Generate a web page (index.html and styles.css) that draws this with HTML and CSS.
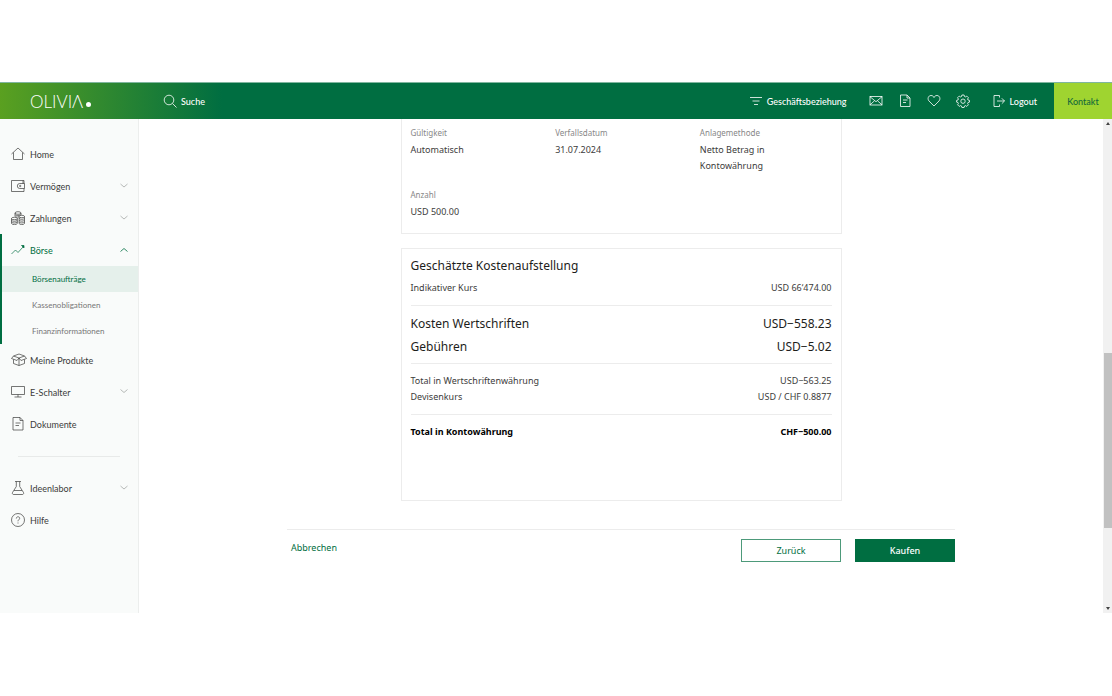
FILE: index.html
```html
<!DOCTYPE html>
<html lang="de">
<head>
<meta charset="utf-8">
<meta name="viewport" content="width=device-width, initial-scale=1">
<title>Olivia – Börsenaufträge</title>
<link rel="stylesheet" href="styles.css">
</head>
<body>
<div class="app">
  <header class="header">
    <a class="logo" href="#" aria-label="Olivia"><span>OLIVIɅ</span><span class="logo-dot"></span></a>
    <button class="head-item search" type="button">
      <svg class="icon" viewBox="0 0 14 14"><circle cx="6" cy="6" r="4.8"/><path d="M9.500 9.500l4 4"/></svg>Suche
    </button>
    <div class="head-actions">
      <button class="head-item relation" type="button">
        <svg class="icon" viewBox="0 0 14 14"><path d="M1 3.500h12M3.500 7h7M5 10.500h4"/></svg>Geschäftsbeziehung
      </button>
      <div class="tools">
        <a class="head-item" href="#" aria-label="Nachrichten"><svg class="icon" viewBox="0 0 14 14"><rect x="1" y="2.500" width="12" height="8.500"/><path d="M1 2.700l6 5 6-5M1 10.800l4.500-4M13 10.800l-4.500-4"/></svg></a>
        <a class="head-item" href="#" aria-label="Dokumente"><svg class="icon" viewBox="0 0 14 14"><path d="M2.500 1h6.500l3 3v8.500h-9.500zM9 1v3h3M5 6h4.500M5 8.500h3"/></svg></a>
        <a class="head-item" href="#" aria-label="Favoriten"><svg class="icon" viewBox="0 0 14 14"><path d="M7 12L2 7C.2 5 1.200 1.500 4 1.500c1.500 0 2.500.8 3 2 .5-1.200 1.500-2 3-2 2.800 0 3.800 3.500 2 5.500z"/></svg></a>
        <a class="head-item" href="#" aria-label="Einstellungen"><svg class="icon" viewBox="0 0 14 14"><path d="M5.900 1h2.200l.4 1.500 1 .4 1.300-.8 1.600 1.600-.8 1.300.4 1 1.500.400v1.700l-1.500.4-.4 1 .8 1.300-1.600 1.600-1.300-.8-1 .4-.4 1.500H5.900L5.500 12l-1-.4-1.300.8-1.600-1.600.8-1.300-.4-1L.6 8.100V6.400L2 6l.4-1-.8-1.300 1.600-1.600 1.300.8 1-.4z"/><circle cx="7" cy="7.200" r="2.200"/></svg></a>
      </div>
      <button class="head-item" type="button">
        <svg class="icon" viewBox="0 0 14 14"><path d="M7.500 3.500V1.500H2v11h5.500v-2M5 7h7.500M9.800 4.300l2.700 2.700-2.700 2.700"/></svg>Logout
      </button>
    </div>
    <a class="contact" href="#">Kontakt</a>
  </header>

  <div class="shell">
    <nav class="sidebar" aria-label="Hauptnavigation">
      <a class="nav-item" href="#"><svg class="icon" viewBox="0 0 14 14"><path d="M.5 7L7 1l6.500 6M2.500 5.500v7h9v-7"/></svg>Home</a>
      <a class="nav-item" href="#"><svg class="icon" viewBox="0 0 14 14"><path d="M13 4.500v-3H.5v11H13v-3M13.500 4.500H8.800a2.500 2.500 0 0 0 0 5h4.700zM12 1.500v3"/><circle cx="9.200" cy="7" r=".7"/></svg>Vermögen<svg class="chevron" viewBox="0 0 8 8"><path d="M.5 2L4 5l3.500-3"/></svg></a>
      <a class="nav-item" href="#"><svg class="icon" viewBox="0 0 14 14"><ellipse cx="7" cy="2" rx="3" ry="1.300"/><ellipse cx="3.400" cy="7.500" rx="2.900" ry="1.200"/><ellipse cx="10.800" cy="5.500" rx="2.700" ry="1.200"/><path d="M4 2v3.500M10 2v2M4.200 3.800c1 1 4 1 5.300 0M4.500 5.500c1 .7 2 .7 3.300.4M.5 7.500v5c.8 1.500 5 1.500 5.800 0v-5M.5 9.200c.8 1.500 5 1.500 5.800 0M.5 10.900c.8 1.500 5 1.500 5.800 0M8.100 5.500v7c.8 1.500 4.600 1.500 5.400 0v-7M8.100 7.300c.8 1.400 4.600 1.400 5.400 0M8.100 9.100c.8 1.400 4.600 1.400 5.400 0M8.100 10.900c.8 1.400 4.600 1.400 5.400 0"/></svg>Zahlungen<svg class="chevron" viewBox="0 0 8 8"><path d="M.5 2L4 5l3.500-3"/></svg></a>
      <div class="nav-group">
        <a class="nav-item active" href="#"><svg class="icon" viewBox="0 0 14 14"><path d="M.5 11L4.500 7l2.500 2.500L12 4"/><path class="solid" d="M10.500 2.500H13v2.500z"/></svg>Börse<svg class="chevron" viewBox="0 0 8 8"><path d="M.5 5.500L4 2.500l3.500 3"/></svg></a>
        <a class="sub-item current" href="#" aria-current="page">Börsenaufträge</a>
        <a class="sub-item" href="#">Kassenobligationen</a>
        <a class="sub-item" href="#">Finanzinformationen</a>
      </div>
      <a class="nav-item" href="#"><svg class="icon wide" viewBox="0 0 16 14"><path d="M2.500 3L8 5l5.500-2L8 1zM2.500 3L.5 5.500 6 7.500 8 5l2 2.500 5.500-2-2-2.500M2.500 6.500v4L8 12.500l5.500-2v-4M8 5v7.500"/></svg>Meine Produkte</a>
      <a class="nav-item" href="#"><svg class="icon" viewBox="0 0 14 14"><path d="M.5 1.500h13v8H.5zM7 9.500v2.500M3.500 12h7"/></svg>E-Schalter<svg class="chevron" viewBox="0 0 8 8"><path d="M.5 1.500L4 4.500l3.500-3"/></svg></a>
      <a class="nav-item" href="#"><svg class="icon" viewBox="0 0 14 14"><path d="M2 .5h7l3 3v9.500H2zM9 .5v3h3M4.500 6h5M4.500 8.500h3.500"/></svg>Dokumente</a>
      <hr class="nav-rule">
      <a class="nav-item" href="#"><svg class="icon" viewBox="0 0 14 14"><path d="M4 .5h6M5.300.5v5L1.500 11.500c-.5 1 .2 2 1 2h9c.8 0 1.500-1 1-2L8.700 5.500v-5M3 9.500h8"/></svg>Ideenlabor<svg class="chevron" viewBox="0 0 8 8"><path d="M.5 2L4 5l3.500-3"/></svg></a>
      <a class="nav-item" href="#"><svg class="icon" viewBox="0 0 14 14"><circle cx="7" cy="7" r="6.500"/><path d="M5.300 5.500c0-2.300 3.400-2.200 3.400-.2C8.700 6.700 7 6.600 7 8.300M7 9.500v1"/></svg>Hilfe</a>
    </nav>

    <main class="main">
      <section class="card details">
        <dl class="fields">
          <div><dt>Gültigkeit</dt><dd>Automatisch</dd></div>
          <div><dt>Verfallsdatum</dt><dd>31.07.2024</dd></div>
          <div><dt>Anlagemethode</dt><dd>Netto Betrag in<br>Kontowährung</dd></div>
          <div><dt>Anzahl</dt><dd>USD 500.00</dd></div>
        </dl>
      </section>

      <section class="card costs">
        <h2 class="card-title">Geschätzte Kostenaufstellung</h2>
        <dl class="cost-group first">
          <div class="cost"><dt>Indikativer Kurs</dt><dd>USD 66‘474.00</dd></div>
        </dl>
        <dl class="cost-group large">
          <div class="cost"><dt>Kosten Wertschriften</dt><dd>USD−558.23</dd></div>
          <div class="cost"><dt>Gebühren</dt><dd>USD−5.02</dd></div>
        </dl>
        <dl class="cost-group">
          <div class="cost"><dt>Total in Wertschriftenwährung</dt><dd>USD−563.25</dd></div>
          <div class="cost"><dt>Devisenkurs</dt><dd>USD / CHF 0.8877</dd></div>
        </dl>
        <dl class="cost-group total">
          <div class="cost"><dt>Total in Kontowährung</dt><dd>CHF−500.00</dd></div>
        </dl>
      </section>

      <div class="actions">
        <a class="cancel" href="#">Abbrechen</a>
        <button class="btn" type="button">Zurück</button>
        <button class="btn primary" type="button">Kaufen</button>
      </div>
    </main>

    <div class="scrollbar" aria-hidden="true">
      <span class="arrow up"></span>
      <span class="track"><span class="thumb"></span></span>
      <span class="arrow down"></span>
    </div>
  </div>
</div>
</body>
</html>
```
FILE: styles.css
```css
* { box-sizing: border-box; }

body {
  margin: 0;
  background: #fff;
  color: #3c3c3b;
  font-family: "Noto Sans", sans-serif;
  font-size: 9px;
}

a { color: inherit; text-decoration: none; }
button { font: inherit; color: inherit; border: 0; padding: 0; background: none; cursor: pointer; }
dl, dd, h2 { margin: 0; }

.app { padding: 82px 0; }

.icon {
  width: 14px;
  height: 14px;
  flex: none;
  fill: none;
  stroke: currentColor;
  stroke-width: 0.8;
}
.icon.wide { width: 16px; margin-right: -2px; }
.icon .solid { fill: currentColor; }

/* Header */
.header {
  display: flex;
  align-items: stretch;
  height: 37px;
  color: #fff;
  background: linear-gradient(90deg, #5aa020 0, #006e41 222px);
  border-top: 1px solid #7fb69f;
  font-family: Lato, sans-serif;
  font-size: 9px;
  font-weight: 500;
}
.logo {
  display: flex;
  align-items: center;
  gap: 3px;
  width: 163px;
  padding-left: 30px;
  font-size: 17px;
  font-weight: 300;
}
.logo-dot { width: 5px; height: 5px; margin-top: 7px; border-radius: 50%; background: #fff; }
.head-item { display: flex; align-items: center; gap: 4px; }
.head-actions { display: flex; margin-left: auto; gap: 22px; }
.tools { display: flex; gap: 15px; }
.contact {
  display: flex;
  align-items: center;
  justify-content: center;
  width: 58px;
  margin-left: 17px;
  background: #9fd430;
  color: #14693b;
}

/* Body below the header */
.shell { display: flex; height: 494px; }

.sidebar {
  width: 139px;
  flex: none;
  padding-top: 19px;
  background: #f9fbfa;
  border-right: 1px solid #eceeed;
  font-family: Lato, sans-serif;
}
.nav-item {
  display: flex;
  align-items: center;
  gap: 5px;
  height: 32px;
  padding: 0 10px 0 11px;
}
.sidebar .icon { stroke-width: 0.7; }
.chevron { width: 8px; height: 8px; margin-left: auto; fill: none; stroke: #a4a8a6; stroke-width: 0.8; }
.nav-group { box-shadow: inset 2px 0 #006e41; }
.active { color: #006e41; }
.active .chevron { stroke: #006e41; }
.sub-item {
  display: flex;
  align-items: center;
  height: 26px;
  margin-left: 2px;
  padding-left: 30px;
  font-size: 8px;
  color: #777;
}
.sub-item.current { background: #e5f0eb; color: #006e41; }
.nav-rule { margin: 16px 18px 15px; border: 0; border-top: 1px solid #e8eae9; }

.main { flex: 1; min-width: 0; overflow: hidden; }
.card {
  max-width: 441px;
  margin: 0 auto;
  padding: 6px 9px;
  border: 1px solid #ececec;
}
.details { padding: 8px 9px 13px; border-top: 0; }
.fields { display: grid; grid-template-columns: repeat(3, 1fr); gap: 15px 13px; }
.fields dt { margin-bottom: 3px; font-size: 8px; line-height: 12px; color: #878787; }
.fields dd { line-height: 16px; }

.costs { margin-top: 14px; min-height: 253px; }
.card-title { margin-bottom: 3px; font-size: 12px; font-weight: 400; line-height: 22px; color: #1d1d1b; }
.cost { display: flex; justify-content: space-between; line-height: 16px; }
.cost-group { padding: 9px 0; border-top: 1px solid #ececec; }
.cost-group.first { padding-top: 0; border-top: 0; }
.cost-group.large { padding: 6px 0 5px; font-size: 12px; color: #1d1d1b; }
.large .cost { line-height: 23px; }
.total { font-weight: 700; color: #000; }

.actions {
  display: flex;
  align-items: flex-start;
  gap: 14px;
  max-width: 668px;
  margin: 28px auto 0;
  padding: 9px 0 0 4px;
  border-top: 1px solid #ececec;
}
.cancel { margin-right: auto; line-height: 18px; color: #006e41; }
.btn { width: 100px; height: 23px; border: 1px solid #4d9a7a; color: #006e41; }
.btn.primary { border-color: #006e41; background: #006e41; color: #fff; font-weight: 500; }

/* Scrollbar */
.scrollbar { display: flex; flex-direction: column; width: 9px; flex: none; background: #f1f1f1; }
.arrow { display: flex; align-items: center; justify-content: center; height: 9px; }
.arrow::before { content: ""; border: 2px solid transparent; }
.arrow.up::before { border-top: 0; border-bottom: 3px solid #444; }
.arrow.down::before { border-bottom: 0; border-top: 3px solid #444; }
.track { flex: 1; padding: 225px 0 0 1px; }
.thumb { display: block; height: 175px; background: #c1c1c1; }
```
